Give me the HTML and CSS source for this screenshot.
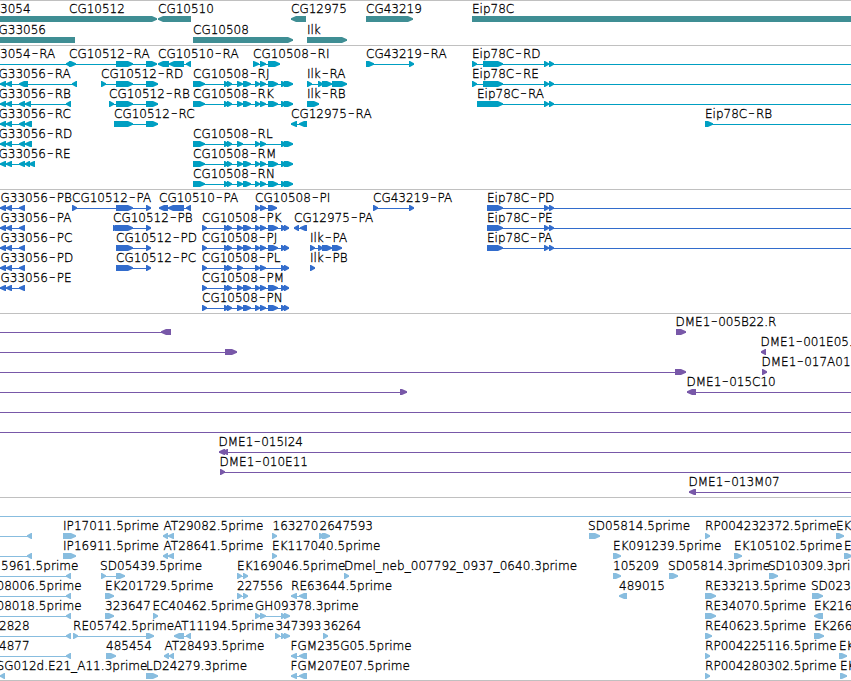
FILE: index.html
```
<!DOCTYPE html>
<html lang="en">
<head>
    <meta charset="UTF-8">
    <title>Genome Tracks</title>
    <link rel="stylesheet" href="styles.css">
</head>
<body>
    <div id="browser">
        <section class="track genes" data-track="genes"></section>
        <section class="track transcripts" data-track="transcripts"></section>
        <section class="track proteins" data-track="proteins"></section>
        <section class="track clones" data-track="clones"></section>
        <section class="track ests" data-track="ests"></section>
    </div>
    <script src="tracks.js"></script>
</body>
</html>
```
FILE: styles.css
```
body {
    margin: 0;
    background-color: #fff;
    overflow: hidden;
}
#browser {
    display: flex;
    flex-direction: column;
    width: 851px;
}
.track {
    display: flex;
    flex-direction: column;
    border-top: 1px solid #c0c0c0;
    padding-bottom: 3px;
}
.row {
    display: block;
    width: 851px;
    height: 20px;
    overflow: visible;
}
.row text {
    font-family: "DejaVu Sans", sans-serif;
    font-size: 12px;
    font-weight: 200;
    fill: #000;
    stroke: #000;
    stroke-width: 0.3px;
}
.row .dash {
    font-size: 18px;
}
.genes {
    fill: #3f8e94;
    padding-bottom: 2px;
}
.genes .row {
    height: 21px;
}
.transcripts {
    fill: #009fc2;
}
.proteins {
    fill: #326ccc;
}
.clones {
    fill: #7858a8;
}
.ests {
    fill: #88bddf;
    padding-bottom: 2px;
    border-bottom: 1px solid #c0c0c0;
}
```
FILE: tracks.js
```
const SVG = 'http://www.w3.org/2000/svg';

// exons shared by several features
const UTR_LEFT = '0-6 6-12 19-25';
const CG10508_MID = '224-229 227-232 237-243 243-251 255-260 260-266 268-278';
const CG10508_SHORT = '224-229 227-232 237-243 255-260 260-266';
const EIP_END = '544-549 549-554';

// each row is a list of [label, label x, strand, start, end, exons]
const tracks = {
    genes: [
        [
            ['3054', 0, '', 0, 0, ''],
            ['CG10512', 69, '>', 0, 157, '0-157'],
            ['CG10510', 158, '<', 158, 191, '158-191'],
            ['CG12975', 291, '<', 291, 306, '291-306'],
            ['CG43219', 366, '>', 366, 413, '366-413'],
            ['Eip78C', 472, '>', 472, 860, '472-860']
        ],
        [
            ['G33056', -1.5, '', 0, 75, '0-75'],
            ['CG10508', 193, '>', 193, 293, '193-293'],
            ['Ilk', 307, '>', 307, 347, '307-347']
        ]
    ],
    transcripts: [
        [
            ['3054-RA', 0, '<', 0, 71, '66-71'],
            ['CG10512-RA', 69, '>', 69, 157, '69-76 116-133 146-157'],
            ['CG10510-RA', 158, '<', 158, 191, '158-169 169-184 186-191'],
            ['CG10508-RI', 253, '>', 253, 280, '253-259 260-266 268-280'],
            ['CG43219-RA', 366, '>', 366, 414, '366-374 409-414'],
            ['Eip78C-RD', 472, '>', 472, 851, '472-477 483-503 ' + EIP_END]
        ],
        [
            ['G33056-RA', -1.5, '<', 0, 77, '0-6 6-12 19-28 72-77'],
            ['CG10512-RD', 101, '>', 101, 158, '101-106 116-133 146-158'],
            ['CG10508-RJ', 193, '>', 193, 293, '193-205 281-287 284-293 ' + CG10508_MID],
            ['Ilk-RA', 307, '>', 307, 347, '307-312 318-323 322-332 332-347'],
            ['Eip78C-RE', 472, '>', 472, 851, '472-477 483-503 ' + EIP_END]
        ],
        [
            ['G33056-RB', -1.5, '<', 0, 71, UTR_LEFT + ' 25-31 66-71'],
            ['CG10512-RB', 109, '>', 109, 158, '109-114 116-133 146-158'],
            ['CG10508-RK', 193, '>', 193, 293, '193-205 281-287 284-293 ' + CG10508_MID],
            ['Ilk-RB', 307, '>', 307, 319, '307-319'],
            ['Eip78C-RA', 477, '>', 477, 851, '477-503 ' + EIP_END]
        ],
        [
            ['G33056-RC', -1.5, '<', 0, 32, UTR_LEFT + ' 25-32'],
            ['CG10512-RC', 114, '>', 114, 158, '114-133 146-158'],
            ['CG12975-RA', 291, '<', 291, 307, '291-297 299-307'],
            ['Eip78C-RB', 705, '>', 705, 851, '705-713']
        ],
        [
            ['G33056-RD', -1.5, '<', 0, 32, UTR_LEFT + ' 25-32'],
            ['CG10508-RL', 193, '>', 193, 293, '193-205 281-287 284-293 ' + CG10508_SHORT]
        ],
        [
            ['G33056-RE', -1.5, '<', 0, 35, UTR_LEFT + ' 25-30 29-35'],
            ['CG10508-RM', 193, '>', 193, 293, '193-205 281-287 284-293 ' + CG10508_MID]
        ],
        [
            ['CG10508-RN', 193, '>', 193, 293, '193-205 281-287 284-293 ' + CG10508_MID]
        ]
    ],
    proteins: [
        [
            ['G33056-PB', 0.5, '<', 0, 25, UTR_LEFT],
            ['CG10512-PA', 72, '>', 72, 151, '72-77 116-133 146-151'],
            ['CG10510-PA', 159, '<', 159, 191, '159-168 168-184 186-191'],
            ['CG10508-PI', 255, '>', 255, 277, '255-260 260-266 268-277'],
            ['CG43219-PA', 373, '>', 373, 414, '373-378 409-414'],
            ['Eip78C-PD', 487, '>', 487, 851, '487-503 ' + EIP_END]
        ],
        [
            ['G33056-PA', 0.5, '<', 0, 25, UTR_LEFT],
            ['CG10512-PB', 113, '>', 113, 151, '113-118 115-133 146-151'],
            ['CG10508-PK', 202, '>', 202, 289, '202-207 281-286 284-289 ' + CG10508_MID],
            ['CG12975-PA', 294, '<', 294, 307, '294-299 300-307'],
            ['Eip78C-PE', 487, '>', 487, 851, '487-503 ' + EIP_END]
        ],
        [
            ['G33056-PC', 0.5, '<', 0, 25, UTR_LEFT],
            ['CG10512-PD', 116, '>', 116, 151, '116-133 146-151'],
            ['CG10508-PJ', 202, '>', 202, 289, '202-207 281-286 284-289 ' + CG10508_MID],
            ['Ilk-PA', 310, '>', 310, 342, '310-315 318-323 322-332 332-342'],
            ['Eip78C-PA', 487, '>', 487, 851, '487-503 ' + EIP_END]
        ],
        [
            ['G33056-PD', 0.5, '<', 0, 25, UTR_LEFT],
            ['CG10512-PC', 116, '>', 116, 151, '116-133 146-151'],
            ['CG10508-PL', 202, '>', 202, 289, '202-207 281-286 284-289 ' + CG10508_SHORT],
            ['Ilk-PB', 310, '>', 310, 315, '310-315']
        ],
        [
            ['G33056-PE', 0.5, '<', 0, 25, UTR_LEFT],
            ['CG10508-PM', 202, '>', 202, 289, '202-207 281-286 284-289 ' + CG10508_MID]
        ],
        [
            ['CG10508-PN', 202, '>', 202, 289, '202-207 281-286 284-289 ' + CG10508_MID]
        ]
    ],
    clones: [
        [
            ['', 0, '<', 0, 171, '161-171'],
            ['DME1-005B22.R', 675.5, '>', 676, 686, '676-686']
        ],
        [
            ['', 0, '>', 0, 237, '225-237'],
            ['DME1-001E05.', 760.5, '<', 761, 766, '761-766']
        ],
        [
            ['', 0, '>', 0, 686, '675-686'],
            ['DME1-017A01', 761.5, '>', 762, 767, '762-767']
        ],
        [
            ['', 0, '>', 0, 407, '400-407'],
            ['DME1-015C10', 686.5, '<', 687, 851, '687-696']
        ],
        [['', 0, '>', 0, 851, '']],
        [['', 0, '>', 0, 851, '']],
        [['DME1-015I24', 218.5, '<', 219, 851, '219-225 222-228']],
        [['DME1-010E11', 219.5, '>', 220, 851, '220-225']],
        [['DME1-013M07', 688.5, '<', 689, 851, '689-696']]
    ],
    ests: [
        [['', 0, '>', 0, 851, '']],
        [
            ['', 0, '<', 0, 32, '27-32'],
            ['IP17011.5prime', 63, '>', 63, 76, '63-76'],
            ['AT29082.5prime', 163.5, '<', 163, 174, '163-168 168-174'],
            ['163270', 272.5, '>', 272, 277, '272-277'],
            ['2647593', 319.5, '>', 319, 330, '319-325 322-330'],
            ['SD05814.5prime', 588, '>', 589, 600, '589-600'],
            ['RP004232372.5prime', 705, '>', 705, 710, '705-710'],
            ['EK', 836, '>', 836, 844, '836-844']
        ],
        [
            ['', 0, '<', 0, 32, '27-32'],
            ['IP16911.5prime', 63, '>', 63, 76, '63-76'],
            ['AT28641.5prime', 163.5, '<', 163, 174, '163-168 168-174'],
            ['EK117040.5prime', 272, '>', 272, 277, '272-277'],
            ['EK091239.5prime', 613, '>', 613, 621, '613-621'],
            ['EK105102.5prime', 734, '>', 734, 742, '734-742'],
            ['E', 844, '>', 844, 852, '844-852']
        ],
        [
            ['5961.5prime', 1, '<', 0, 71, '66-71'],
            ['SD05439.5prime', 100, '>', 101, 125, '101-106 116-125'],
            ['EK169046.5prime', 237, '>', 237, 248, '237-242 243-248'],
            ['Dmel_neb_007792_0937_0640.3prime', 344, '>', 344, 349, '344-349'],
            ['105209', 613, '>', 613, 621, '613-621'],
            ['SD05814.3prime', 668, '>', 669, 678, '669-678'],
            ['SD10309.3pri', 768, '>', 769, 778, '769-778']
        ],
        [
            ['08006.5prime', -3.5, '<', 0, 71, '66-71'],
            ['EK201729.5prime', 105, '>', 105, 114, '105-114'],
            ['227556', 237, '>', 237, 248, '237-242 243-248'],
            ['RE63644.5prime', 291, '<', 291, 307, '291-297 299-307'],
            ['489015', 619, '<', 619, 627, '619-627'],
            ['RE33213.5prime', 705, '>', 705, 716, '705-716'],
            ['SD023', 811, '>', 812, 823, '812-823']
        ],
        [
            ['08018.5prime', -3.5, '<', 0, 71, '66-71'],
            ['323647', 105, '>', 105, 114, '105-114'],
            ['EC40462.5prime', 152.5, '>', 153, 158, '153-158'],
            ['GH09378.3prime', 255, '>', 255, 290, '255-260 260-266 281-286 284-290'],
            ['RE34070.5prime', 705, '>', 705, 716, '705-716'],
            ['EK216', 814, '<', 814, 823, '814-823']
        ],
        [
            ['2828', -1, '<', 0, 71, '66-71'],
            ['RE05742.5prime', 73, '>', 73, 154, '73-78 146-154'],
            ['AT11194.5prime', 174, '<', 174, 191, '174-184 186-191'],
            ['347393', 275.5, '>', 275, 290, '275-280 281-286 284-290'],
            ['36264', 323, '>', 323, 328, '323-328'],
            ['RE40623.5prime', 705, '>', 705, 712, '705-712'],
            ['EK266', 814, '>', 814, 824, '814-824']
        ],
        [
            ['4877', -1, '<', 0, 71, '66-71'],
            ['485454', 106, '>', 106, 116, '106-116'],
            ['AT28493.5prime', 164.5, '<', 164, 174, '164-169 169-174'],
            ['FGM235G05.5prime', 290.5, '<', 291, 307, '291-297 299-307'],
            ['RP004225116.5prime', 705, '>', 705, 710, '705-710'],
            ['EK', 839, '>', 839, 847, '839-847']
        ],
        [
            ['SG012d.E21_A11.3prime', -3.5, '<', 0, 5, '0-5'],
            ['LD24279.3prime', 146, '>', 146, 158, '146-158'],
            ['FGM207E07.5prime', 290.5, '<', 291, 307, '291-297 299-307'],
            ['RP004280302.5prime', 705, '>', 705, 710, '705-710'],
            ['EK', 840, '>', 840, 847, '840-847']
        ]
    ]
};

function add(parent, name, attrs) {
    const el = document.createElementNS(SVG, name);
    for (const key in attrs) {
        el.setAttribute(key, attrs[key]);
    }
    parent.appendChild(el);
    return el;
}

// block with a pointed end in the direction of the strand
function drawExon(svg, a, b, strand) {
    const tip = Math.min(5, b - a - 1);
    let points = `${a},15 ${b},15 ${b},21 ${a},21`;
    if (strand === '>') {
        points = `${a},15 ${b - tip},15 ${b},17.3 ${b},18.7 ${b - tip},21 ${a},21`;
    } else if (strand === '<') {
        points = `${b},15 ${a + tip},15 ${a},17.3 ${a},18.7 ${a + tip},21 ${b},21`;
    }
    add(svg, 'polygon', { points: points });
}

function drawLabel(svg, label, x) {
    const text = add(svg, 'text', { x: x, y: 12 });
    const [name, suffix] = label.split('-');
    if (!suffix) {
        text.textContent = label;
        if (label.includes('prime')) {
            text.setAttribute('letter-spacing', 0.05);
        }
        return;
    }
    // long dash between the name and its suffix
    const gap = name === 'DME1' ? 0.7 : 1.1;
    add(text, 'tspan', {}).textContent = name;
    add(text, 'tspan', { class: 'dash', dx: gap }).textContent = '-';
    add(text, 'tspan', { dx: gap }).textContent = suffix;
}

function drawFeature(svg, [label, x, strand, start, end, exons]) {
    if (end > start) {
        add(svg, 'rect', { x: start, y: 18, width: end - start, height: 1 });
    }
    if (exons) {
        exons.split(' ').forEach(exon => {
            const [a, b] = exon.split('-').map(Number);
            drawExon(svg, a, b, strand);
        });
    }
    if (label) {
        drawLabel(svg, label, x);
    }
}

document.querySelectorAll('.track').forEach(track => {
    tracks[track.dataset.track].forEach(row => {
        const svg = add(track, 'svg', { class: 'row' });
        row.forEach(feature => drawFeature(svg, feature));
    });
});
```
